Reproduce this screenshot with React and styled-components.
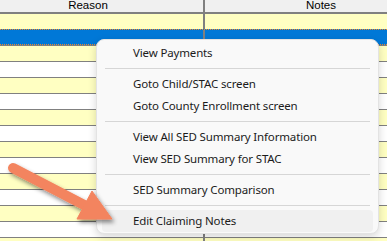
import React from "react";
import styled, { createGlobalStyle } from "styled-components";

const GlobalStyle = createGlobalStyle`
  html, body {
    margin: 0;
    padding: 0;
    background: #ffffff;
  }
`;

const Frame = styled.div`
  position: relative;
  width: 387px;
  height: 241px;
  overflow: hidden;
  background: #ffffff;
`;

const Header = styled.div`
  display: grid;
  grid-template-columns: 203px 2px 1fr;
  height: 12px;
  background: #f0f0f0;
  border-bottom: 2px solid #808080;
  font-family: "Liberation Sans", Arial, sans-serif;
  font-size: 11.5px;
  color: #000;
`;

const HeadCell = styled.div`
  line-height: 10px;
  overflow: hidden;
  text-align: center;
  padding-left: ${(p) => p.$padLeft || 0}px;
  padding-right: ${(p) => p.$padRight || 0}px;
`;

const ColLine = styled.div`
  background: #808080;
`;

const Row = styled.div`
  display: grid;
  grid-template-columns: 203px 2px 1fr;
  box-sizing: border-box;
  height: ${(p) => (p.$first ? 15 : 16)}px;
  border-top: ${(p) =>
    p.$first ? "none" : p.$selected ? "1px dotted #f0882a" : "1px solid #808080"};
  border-bottom: ${(p) => (p.$selected ? "1px dotted #f0882a" : "none")};
  background: ${(p) =>
    p.$selected ? "#0078d7" : p.$odd ? "#ffffff" : "#ffffc2"};
`;

const Cell = styled.div``;

const Menu = styled.div`
  position: absolute;
  left: 96px;
  top: 39px;
  width: 283px;
  box-sizing: border-box;
  padding: 2px 5px 1px;
  background: #f9f9f9;
  border: 1px solid #e3e3e3;
  border-radius: 8px;
  box-shadow: 0 3px 9px rgba(0, 0, 0, 0.16);
  font-family: "Noto Sans", "Open Sans", sans-serif;
  font-size: 11.5px;
  letter-spacing: -0.15px;
  color: #1b1b1b;
`;

const Item = styled.div`
  height: 22px;
  line-height: 22px;
  padding-left: 31px;
  border-radius: 4px;
  white-space: nowrap;
  background: ${(p) => (p.$active ? "#f0f0f0" : "transparent")};
`;

const Separator = styled.div`
  height: 1px;
  margin: 4px 3px;
  background: #d6d6d6;
`;

const Arrow = styled.svg`
  position: absolute;
  left: 0;
  top: 0;
  pointer-events: none;
`;

const menu = [
  ["View Payments"],
  ["Goto Child/STAC screen", "Goto County Enrollment screen"],
  ["View All SED Summary Information", "View SED Summary for STAC"],
  ["SED Summary Comparison"],
  ["Edit Claiming Notes"],
];

export default function App() {
  const rows = Array.from({ length: 16 }, (_, i) => i);
  return (
    <>
      <GlobalStyle />
      <Frame>
        <Header>
          <HeadCell $padRight={27}>Reason</HeadCell>
          <ColLine />
          <HeadCell $padLeft={50}>Notes</HeadCell>
        </Header>
        {rows.map((i) => (
          <Row key={i} $first={i === 0} $selected={i === 1} $odd={i % 2 === 1}>
            <Cell />
            <ColLine />
            <Cell />
          </Row>
        ))}

        <Menu>
          {menu.map((group, gi) => (
            <React.Fragment key={gi}>
              {gi > 0 && <Separator />}
              {group.map((label) => (
                <Item key={label} $active={label === "Edit Claiming Notes"}>
                  {label}
                </Item>
              ))}
            </React.Fragment>
          ))}
        </Menu>

        <Arrow width="387" height="241" viewBox="0 0 387 241">
          <defs>
            <filter id="arrowShadow" x="-20%" y="-20%" width="140%" height="160%">
              <feDropShadow dx="2" dy="3" stdDeviation="2" floodColor="#000" floodOpacity="0.45" />
            </filter>
          </defs>
          <g filter="url(#arrowShadow)" fill="#f3845e" stroke="#f3845e">
            <line x1="13" y1="168" x2="88" y2="207" strokeWidth="10" strokeLinecap="round" />
            <polygon points="92,191 77,219 112,219" strokeWidth="1" strokeLinejoin="round" />
          </g>
        </Arrow>
      </Frame>
    </>
  );
}
